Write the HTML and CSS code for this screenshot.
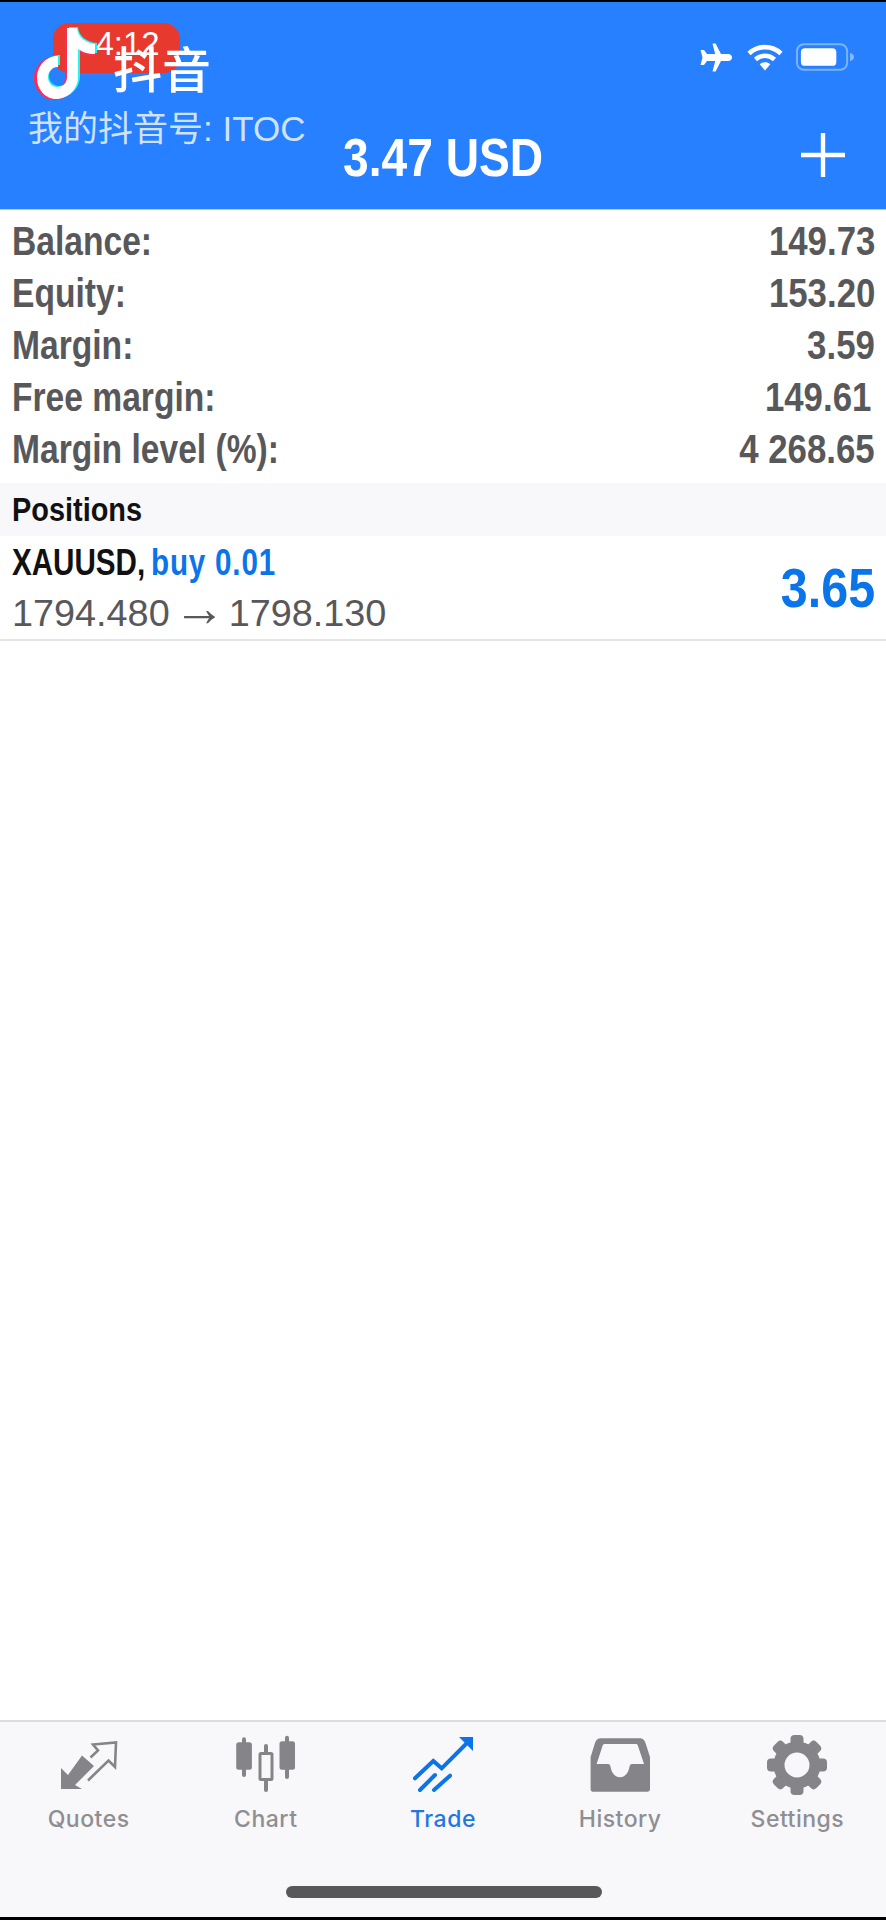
FILE: index.html
```html
<!DOCTYPE html>
<html lang="en">
<head>
<meta charset="utf-8">
<title>Trade</title>
<link rel="stylesheet" href="styles.css">
</head>
<body>
<div class="app">
  <header class="header">
    <div class="status">
      <svg class="ic-plane" viewBox="0 0 33 29"><path fill="#fff" d="M13.5 0.5 L16.6 0.5 L22 11 L29 11 C32 11 33 13 33 14.5 C33 16 32 18 29 18 L22 18 L16.6 28.5 L13.5 28.5 L16.2 18 L8 18 L5 22 L1.5 22 L3.5 14.5 L1.5 7 L5 7 L8 11 L16.2 11 Z"/></svg>
      <svg class="ic-wifi" viewBox="0 0 36 28"><g fill="none" stroke="#fff" stroke-width="4.6"><path d="M2 10.5 C11 2 25 2 34 10.5"/><path d="M8.5 16.5 C14 11.5 22 11.5 27.5 16.5"/></g><path fill="#fff" d="M12.7 21.2 C16 18.6 20 18.6 23.3 21.2 L18 27.5 Z"/></svg>
      <svg class="ic-batt" viewBox="0 0 59 28"><rect x="1" y="1" width="51" height="26" rx="7" fill="none" stroke="#fff" stroke-opacity=".4" stroke-width="2"/><rect x="5" y="5" width="36" height="18" rx="4" fill="#fff"/><path d="M55 10 C57.5 10.5 59 12 59 14 C59 16 57.5 17.5 55 18 Z" fill="#fff" fill-opacity=".45"/></svg>
    </div>
    <div class="titlebar">
      <span></span>
      <h1 class="title">3.47 USD</h1>
      <button class="add" aria-label="Add"><svg viewBox="0 0 44 44"><path d="M22 0 V44 M0 22 H44" stroke="#fff" stroke-width="4.4" fill="none"/></svg></button>
    </div>
    <div class="mark">
      <div class="mark-time">4:12</div>
      <svg class="mark-logo" viewBox="0 0 64 74">
        <path fill="#fe2c55" d="M31 1 H42 C43 10 50 17 60 18 V29 C53 29 47 27 42 23 V50 C42 63 32 73 20 73 C9 73 0 63 0 51 C0 39 10 29 23 29 V41 C16 40 12 45 12 51 C12 57 16 61 21 61 C27 61 31 57 31 50 Z"/>
        <path fill="#25f4ee" d="M35 0 H44 C45 9 52 15 63 16 V26 C56 26 50 24 46 21 V49 C46 61 36 71 24 71 C13 71 5 62 5 50 C5 38 14 28 26 28 V38 C20 38 15 43 15 49 C15 55 20 59 25 59 C31 59 35 55 35 49 Z"/>
        <path fill="#fff" d="M33 1 H43 C44 10 51 16 61 17 V27 C54 27 48 25 44 22 V50 C44 62 34 72 22 72 C11 72 3 62 3 51 C3 39 12 29 24 29 V40 C18 40 14 45 14 50 C14 56 18 60 23 60 C29 60 33 56 33 50 Z"/>
      </svg>
      <div class="mark-name">抖音</div>
      <div class="mark-id">我的抖音号: ITOC</div>
    </div>
  </header>

  <section class="summary">
    <div class="row"><span class="nl">Balance:</span><span class="nr">149.73</span></div>
    <div class="row"><span class="nl">Equity:</span><span class="nr">153.20</span></div>
    <div class="row"><span class="nl">Margin:</span><span class="nr">3.59</span></div>
    <div class="row row-free"><span class="nl">Free margin:</span><span class="nr">149.61</span></div>
    <div class="row"><span class="nl">Margin level (%):</span><span class="nr">4 268.65</span></div>
  </section>

  <div class="section-head"><span class="nl nl-head">Positions</span></div>

  <div class="position">
    <div class="pos-info">
      <div class="pos-name"><span class="nl nl-tight">XAUUSD, <span class="pos-buy">buy 0.01</span></span></div>
      <div class="pos-price">1794.480 <span class="pos-arrow">→</span> 1798.130</div>
    </div>
    <div class="pos-profit nr">3.65</div>
  </div>

  <div class="spacer"></div>

  <nav class="tabs">
    <div class="tab">
      <svg class="tab-ic" viewBox="0 0 64 60"><path fill="#858589" d="M4 51 L4 30 L11 37 L25 17.500 L37 28 L18 47 L25 51 Z"/><path fill="none" stroke="#858589" stroke-width="2.600" d="M31 42.500 L51.500 22.500 L58 29 L59 4.500 L36 6.500 L41 12.500 L33.500 19.500"/></svg>
      <span>Quotes</span>
    </div>
    <div class="tab">
      <svg class="tab-ic ic-over" viewBox="0 0 64 60"><g fill="#858589"><rect x="2.200" y="4.300" width="15.700" height="27.400" rx="2.500"/><rect x="8" y="-0.700" width="4" height="39.700" rx="2"/><rect x="45.500" y="3.300" width="15.500" height="28.400" rx="2.500"/><rect x="51" y="-2.300" width="4" height="43.300" rx="2"/><rect x="30" y="6" width="4" height="48" rx="2"/></g><rect x="26" y="15.500" width="12" height="26" rx="1" fill="#f8f7f9" stroke="#858589" stroke-width="3"/></svg>
      <span>Chart</span>
    </div>
    <div class="tab tab-on">
      <svg class="tab-ic ic-over" viewBox="0 0 64 60"><g fill="none" stroke="#0a74e8" stroke-width="4" stroke-linecap="round"><path d="M4 40.300 L22.300 23 L30.700 30.300 L58 3"/></g><path d="M48 -1 H62 V13 Z" fill="#0a74e8"/><g fill="none" stroke="#0a74e8" stroke-width="4" stroke-linecap="round"><path d="M9 52 L24 37"/><path d="M23 52 L39 37.700"/></g></svg>
      <span>Trade</span>
    </div>
    <div class="tab">
      <svg class="tab-ic" viewBox="0 0 64 60"><path fill="#858589" fill-rule="evenodd" d="M13 .3 H51 C55 .3 56.500 2 57.500 5 L62 19 V51 C62 53 61 53.700 59 53.700 H5 C3.500 53.700 2.600 53 2.600 51 V19 L7 5 C8 2 9.500 .3 13 .3 Z M17 6 C15.500 6 15 6.500 14.500 8 L8.600 26 H20 C21.500 26 22 27 22.500 28.500 C23.500 35 27 39.300 32 39.300 C37 39.300 40.500 35 41.500 28.500 C42 27 42.500 26 44 26 H56 L50 8 C49.500 6.500 49 6 48 6 Z"/></svg>
      <span>History</span>
    </div>
    <div class="tab">
      <svg class="tab-ic" viewBox="0 0 64 60"><circle cx="32" cy="27" r="18" fill="none" stroke="#858589" stroke-width="11"/><g fill="#858589"><rect x="25.500" y="-3" width="13" height="12" rx="4"/><rect x="25.500" y="-3" width="13" height="12" rx="4" transform="rotate(45 32 27)"/><rect x="25.500" y="-3" width="13" height="12" rx="4" transform="rotate(90 32 27)"/><rect x="25.500" y="-3" width="13" height="12" rx="4" transform="rotate(135 32 27)"/><rect x="25.500" y="-3" width="13" height="12" rx="4" transform="rotate(180 32 27)"/><rect x="25.500" y="-3" width="13" height="12" rx="4" transform="rotate(225 32 27)"/><rect x="25.500" y="-3" width="13" height="12" rx="4" transform="rotate(270 32 27)"/><rect x="25.500" y="-3" width="13" height="12" rx="4" transform="rotate(315 32 27)"/></g></svg>
      <span>Settings</span>
    </div>
    <div class="home-bar"></div>
  </nav>
</div>
</body>
</html>
```

FILE: styles.css
```css
* { box-sizing: border-box; margin: 0; padding: 0; }
html, body { background: #fff; }
.app {
  width: 886px;
  height: 1920px;
  display: flex;
  flex-direction: column;
  border-top: 2px solid #000;
  border-bottom: 3px solid #000;
  font-family: "Liberation Sans", Arial, sans-serif;
  overflow: hidden;
}
.nl, .nr { display: inline-block; white-space: nowrap; }
.nl { transform: scaleX(.84); transform-origin: left center; }
.nr { transform: scaleX(.87); transform-origin: right center; }
.nl-head { transform: scaleX(.85); }
.nl-tight { transform: scaleX(.8); }
.header {
  position: relative;
  height: 208px;
  background: #2680ff;
  border-bottom: 1px solid #a9ccfd;
  padding: 40px 33px 0 0;
  display: flex;
  flex-direction: column;
  flex: none;
}
.status { display: flex; justify-content: flex-end; align-items: center; height: 30px; margin-right: 4px; }
.ic-plane { width: 33px; height: 29px; margin-right: 15px; }
.ic-wifi { width: 36px; height: 28px; margin-right: 13px; }
.ic-batt { width: 58px; height: 28px; margin-right: -5px; }
.titlebar {
  display: grid;
  grid-template-columns: 1fr auto 1fr;
  align-items: center;
  margin-top: 52px;
  padding-left: 33px;
}
.title { font-size: 54px; line-height: 66px; font-weight: 700; color: #fff; transform: scaleX(.855); }
.add { justify-self: end; width: 44px; height: 44px; margin-right: 8px; margin-top: -4px; background: none; border: 0; display: flex; }
.add svg { width: 44px; height: 44px; }

.mark { position: absolute; left: 0; top: 0; width: 320px; height: 150px; font-family: "Liberation Sans", "Noto Sans CJK SC", sans-serif; }
.mark-time { position: absolute; left: 53px; top: 21px; width: 127px; height: 50px; background: #e8392f; border-radius: 16px; color: #fff; font-size: 33px; line-height: 42px; text-align: center; padding-left: 22px; }
.mark-logo { position: absolute; left: 34px; top: 25px; width: 64px; height: 74px; }
.mark-name { position: absolute; left: 113px; top: 38px; font-size: 49px; line-height: 54px; font-weight: 500; color: #fff; font-family: "Noto Sans CJK SC", sans-serif; }
.mark-id { position: absolute; left: 28px; top: 106px; font-size: 35px; line-height: 42px; color: rgba(255,255,255,.78); white-space: nowrap; }

.summary { padding-top: 5px; flex: none; }
.row {
  display: flex;
  justify-content: space-between;
  height: 52px;
  align-items: center;
  padding: 0 11px 0 12px;
  font-size: 40px;
  font-weight: 700;
  color: #58585a;
}
.row-free { padding-right: 15px; }
.section-head {
  flex: none;
  margin-top: 8px;
  height: 53px;
  background: #f8f7f9;
  padding-left: 12px;
  font-size: 34px;
  line-height: 53px;
  font-weight: 700;
  color: #111;
}
.position {
  flex: none;
  height: 105px;
  display: flex;
  justify-content: space-between;
  align-items: center;
  padding: 0 11px 0 12px;
  border-bottom: 2px solid #e4e4e6;
}
.pos-name { font-size: 37px; line-height: 50px; font-weight: 700; color: #111; }
.pos-buy { color: #0a74e8; letter-spacing: 1px; margin-left: -3px; }
.pos-price { font-size: 37.800px; line-height: 50px; color: #58585a; white-space: nowrap; word-spacing: -7px; }
.pos-arrow { font-size: 52px; line-height: 40px; }
.pos-profit { font-size: 55px; font-weight: 700; color: #0a74e8; transform: scaleX(.88); }
.spacer { flex: 1; }
.tabs {
  position: relative;
  flex: none;
  height: 197px;
  background: #f8f7f9;
  border-top: 2px solid #dcdcde;
  display: grid;
  grid-template-columns: repeat(5, 1fr);
  align-items: start;
  padding-top: 16px;
}
.tab {
  display: flex;
  flex-direction: column;
  align-items: center;
  color: #8e8e93;
  font-family: "Inter", "Liberation Sans", sans-serif;
  font-size: 23px;
  font-weight: 500;
  line-height: 30px;
  letter-spacing: .5px;
}
.tab-on { color: #1f78e0; }
.tab-ic { width: 64px; height: 60px; margin-bottom: 6px; overflow: visible; }
.home-bar { position: absolute; left: 286px; top: 164px; width: 316px; height: 12px; border-radius: 6px; background: #58585a; }
```
